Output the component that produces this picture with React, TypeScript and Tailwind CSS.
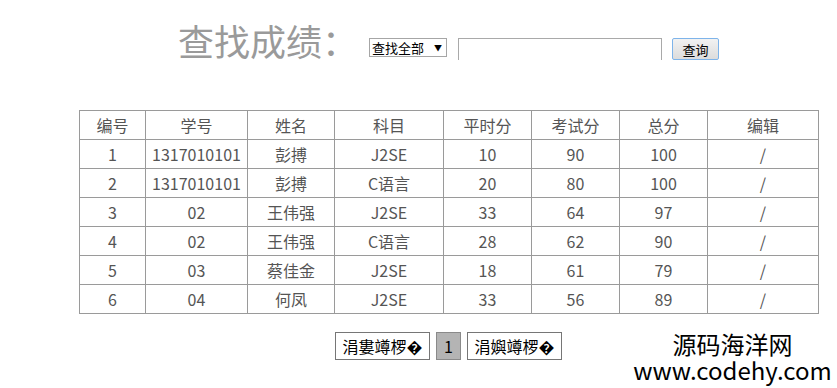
import React from "react";

const rows = [
  ["1", "1317010101", "彭搏", "J2SE", "10", "90", "100", "/"],
  ["2", "1317010101", "彭搏", "C语言", "20", "80", "100", "/"],
  ["3", "02", "王伟强", "J2SE", "33", "64", "97", "/"],
  ["4", "02", "王伟强", "C语言", "28", "62", "90", "/"],
  ["5", "03", "蔡佳金", "J2SE", "18", "61", "79", "/"],
  ["6", "04", "何凤", "J2SE", "33", "56", "89", "/"],
];
const heads = ["编号", "学号", "姓名", "科目", "平时分", "考试分", "总分", "编辑"];
const widths = [66, 102, 87, 109, 88, 88, 88, 111];

export default function App() {
  return (
    <div
      className="relative w-[837px] h-[388px] overflow-hidden bg-white"
      style={{ fontFamily: '"Noto Sans CJK SC", "Noto Sans", sans-serif' }}
    >
      <div className="flex items-start pt-[22px] pl-[178px]">
        <h1 className="text-[36px] leading-none text-[#9a9a9a] font-normal w-[191px] whitespace-nowrap">查找成绩：</h1>
        <div className="flex items-start mt-[16px]">
          <div className="flex items-center justify-between w-[78px] h-[19px] border border-[#a6a6a6] pl-[2px] pr-[4px] text-[13px] leading-none text-black">
            <span>查找全部</span>
            <span className="text-[8px]">▼</span>
          </div>
          <div className="ml-[11px] w-[204px] h-[22px] border border-b-0 border-[#a9a9a9]" />
          <div className="ml-[10px] flex items-center justify-center w-[47px] h-[22px] border border-[#7eb4ea] rounded-[2px] bg-gradient-to-b from-[#f2f2f2] to-[#dcdcdc] text-[13px] leading-none text-black">
            查询
          </div>
        </div>
      </div>

      <table className="ml-[79px] mt-[50px] border-collapse table-fixed w-[740px] text-[16px] text-[#555]">
        <colgroup>
          {widths.map((w, i) => (
            <col key={i} style={{ width: w }} />
          ))}
        </colgroup>
        <thead>
          <tr className="h-[29px]">
            {heads.map((h) => (
              <th key={h} className="border border-[#9a9a9a] font-normal text-center p-0 leading-none">
                {h}
              </th>
            ))}
          </tr>
        </thead>
        <tbody>
          {rows.map((r, i) => (
            <tr key={i} className="h-[29px]">
              {r.map((c, j) => (
                <td key={j} className="border border-[#9a9a9a] text-center p-0 leading-none">
                  {c}
                </td>
              ))}
            </tr>
          ))}
        </tbody>
      </table>

      <div className="flex items-center mt-[18px] ml-[335px] text-[16px] leading-none text-black">
        <div className="flex items-center justify-center w-[95px] h-[28px] border border-[#767676]">涓婁竴椤�</div>
        <div className="ml-[6px] flex items-center justify-center w-[25px] h-[28px] border border-[#8a8a8a] bg-[#b4b4b4]">1</div>
        <div className="ml-[6px] flex items-center justify-center w-[95px] h-[28px] border border-[#767676]">涓嬩竴椤�</div>
      </div>

      <div className="absolute left-[628px] top-[332px] w-[209px] flex flex-col items-center text-black leading-none">
        <div className="text-[24px] h-[24px]">源码海洋网</div>
        <div className="text-[24px] h-[24px] mt-[2px]">www.codehy.com</div>
      </div>
    </div>
  );
}
